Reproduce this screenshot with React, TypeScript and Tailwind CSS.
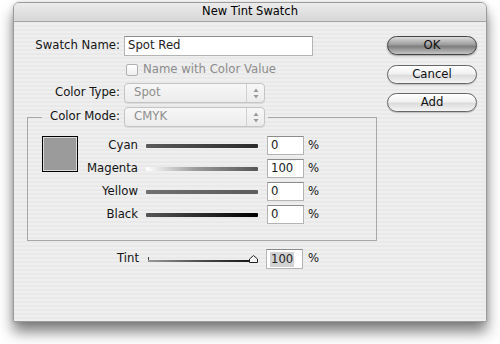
import React from "react";

const font = "font-['DejaVu_Sans','Liberation_Sans',sans-serif]";

function Popup({ value }: { value: string }) {
  return (
    <div className="flex h-[20px] w-[141px] items-center rounded-[4px] border border-[#c4c4c4] bg-[linear-gradient(#f7f7f7,#ececec)] shadow-[0_1px_0_rgba(0,0,0,0.08)]">
      <span className="ml-[9px] flex-1 text-[#8e8e8e]">{value}</span>
      <div className="flex h-full w-[18px] items-center justify-center border-l border-[#d0d0d0]">
        <svg width="6" height="11" viewBox="0 0 6 11">
          <path d="M3 0.5 L5.5 4 L0.5 4 Z" fill="#9a9a9a" />
          <path d="M3 10.5 L5.5 7 L0.5 7 Z" fill="#9a9a9a" />
        </svg>
      </div>
    </div>
  );
}

function Field({ value, w, h = 19, selected = false }: { value: string; w: number; h?: number; selected?: boolean }) {
  return (
    <div
      className="flex items-center border border-[#b4b4b4] border-t-[#8c8c8c] bg-white pl-[3px] text-[#222]"
      style={{ width: w, height: h }}
    >
      {selected ? <span className="bg-[#d2d2d2] px-[1px] leading-[15px]">{value}</span> : value}
    </div>
  );
}

const bars: { name: string; value: string; bar: string }[] = [
  { name: "Cyan", value: "0", bar: "bg-[linear-gradient(to_right,#5a5a5a,#2a2a2a)]" },
  { name: "Magenta", value: "100", bar: "bg-[linear-gradient(to_right,#ffffff,#9a9a9a_45%,#555555)]" },
  { name: "Yellow", value: "0", bar: "bg-[linear-gradient(to_right,#707070,#5c5c5c)]" },
  { name: "Black", value: "0", bar: "bg-[linear-gradient(to_right,#555555,#000000)]" },
];

function Button({ label, primary = false }: { label: string; primary?: boolean }) {
  return (
    <div
      className={
        "flex h-[19px] w-[90px] items-center justify-center rounded-full border text-[#111] " +
        (primary
          ? "border-[#444] bg-[linear-gradient(#dcdcdc,#9c9c9c_45%,#7e7e7e_55%,#c4c4c4)] shadow-[0_1px_2px_rgba(0,0,0,0.35)]"
          : "border-[#666] bg-[linear-gradient(#ffffff,#f2f2f2_45%,#dcdcdc_55%,#f4f4f4)] shadow-[0_1px_1px_rgba(0,0,0,0.2)]")
      }
    >
      {label}
    </div>
  );
}

export default function App() {
  return (
    <div className={`h-[344px] w-[500px] overflow-hidden bg-white pt-[2px] text-[11.7px] leading-none text-[#141414] ${font}`}>
      <div className="ml-[13px] h-[320px] w-[474px] overflow-hidden rounded-t-[6px] border border-[#9c9c9c] bg-[repeating-linear-gradient(to_bottom,#efefef_0px,#efefef_2px,#e9e9e9_2px,#e9e9e9_4px)] shadow-[0_10px_14px_rgba(0,0,0,0.5),0_0_4px_rgba(0,0,0,0.15)]">
        {/* title bar */}
        <div className="flex h-[19px] items-center justify-center border-b border-[#a6a6a6] bg-[linear-gradient(#ececec,#d6d6d6)] text-[11.5px] text-black">
          New Tint Swatch
        </div>

        <div className="flex pt-[14px]">
          {/* left column */}
          <div className="w-[363px]">
            <div className="flex h-[20px] items-center">
              <span className="w-[106px] text-right">Swatch Name:</span>
              <div className="ml-[4px]">
                <Field value="Spot Red" w={189} h={20} />
              </div>
            </div>

            <div className="mt-[8px] flex h-[12px] items-center pl-[112px]">
              <div className="h-[12px] w-[12px] rounded-[2px] border border-[#b0b0b0] bg-[linear-gradient(#ffffff,#eeeeee)]" />
              <span className="ml-[5px] text-[#8c8c8c]">Name with Color Value</span>
            </div>

            <div className="mt-[7px] flex h-[20px] items-center">
              <span className="w-[106px] text-right">Color Type:</span>
              <div className="ml-[4px]">
                <Popup value="Spot" />
              </div>
            </div>

            {/* group box header */}
            <div className="mt-[4px] ml-[13px] flex h-[20px] items-center">
              <div className="h-[10px] w-[15px] self-end border-t border-l border-[#a8a8a8]" />
              <span className="w-[78px] text-right">Color Mode:</span>
              <div className="ml-[4px]">
                <Popup value="CMYK" />
              </div>
              <div className="ml-[3px] h-[10px] flex-1 self-end border-t border-r border-[#a8a8a8]" />
            </div>

            {/* group box body */}
            <div className="ml-[13px] flex h-[114px] w-[350px] border-x border-b border-[#a8a8a8] pt-[9px] pl-[14px]">
              <div className="h-[36px] w-[36px] border border-black bg-[#9b9b9b] shadow-[inset_0_0_0_1px_#d8d8d8]" />
              <div className="flex flex-col gap-[4px]">
                {bars.map((b) => (
                  <div key={b.name} className="flex h-[19px] items-center">
                    <span className="w-[60px] text-right">{b.name}</span>
                    <div className={`ml-[8px] h-[4px] w-[112px] rounded-[1px] ${b.bar}`} />
                    <div className="ml-[9px]">
                      <Field value={b.value} w={37} />
                    </div>
                    <span className="ml-[4px]">%</span>
                  </div>
                ))}
              </div>
            </div>

            {/* tint */}
            <div className="mt-[8px] flex h-[20px] items-center">
              <span className="w-[125px] text-right">Tint</span>
              <div className="relative ml-[9px] h-[10px] w-[110px]">
                <div className="absolute top-[3px] left-0 h-[5px] w-px bg-[#444]" />
                <div className="absolute top-[6px] left-0 h-[2px] w-[108px] bg-[linear-gradient(to_right,#9a9a9a,#4a4a4a_50%,#111111)]" />
                <svg className="absolute top-[1px] left-[101px]" width="9" height="8" viewBox="0 0 9 8">
                  <path d="M4.5 0.5 L8.5 4 L8.5 7.5 L0.5 7.5 L0.5 4 Z" fill="#f4f4f4" stroke="#222" strokeWidth="1" />
                </svg>
              </div>
              <div className="ml-[8px]">
                <Field value="100" w={37} h={20} selected />
              </div>
              <span className="ml-[5px]">%</span>
            </div>
          </div>

          {/* buttons */}
          <div className="ml-[10px] flex flex-col">
            <Button label="OK" primary />
            <div className="mt-[10px]">
              <Button label="Cancel" />
            </div>
            <div className="mt-[9px]">
              <Button label="Add" />
            </div>
          </div>
        </div>
      </div>
    </div>
  );
}
